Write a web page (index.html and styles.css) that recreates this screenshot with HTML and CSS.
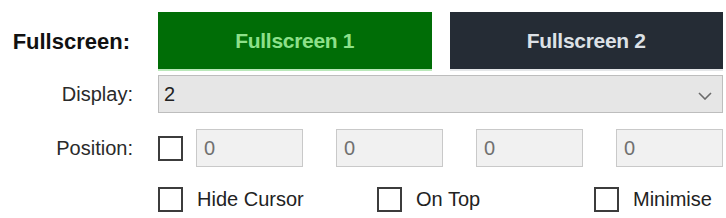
FILE: index.html
```html
<!DOCTYPE html>
<html>
<head>
    <meta charset="utf-8">
    <title>Fullscreen Settings</title>
    <link rel="stylesheet" href="styles.css">
</head>
<body>
    <div class="settings">
        <label class="label label-bold">Fullscreen:</label>
        <div class="screen-buttons">
            <button class="screen-btn screen-btn-active">Fullscreen 1</button>
            <button class="screen-btn screen-btn-dark">Fullscreen 2</button>
        </div>

        <label class="label row-display">Display:</label>
        <div class="select row-display">
            <span>2</span>
            <svg class="chevron" width="14" height="8" viewBox="0 0 14 8">
                <path d="M1 1 L7 7 L13 1" fill="none" stroke="#6b6b6b" stroke-width="1.6"/>
            </svg>
        </div>

        <label class="label row-position">Position:</label>
        <div class="position-row row-position">
            <span class="checkbox"></span>
            <div class="position-inputs">
                <input class="num" type="text" value="0" disabled>
                <input class="num" type="text" value="0" disabled>
                <input class="num" type="text" value="0" disabled>
                <input class="num" type="text" value="0" disabled>
            </div>
        </div>

        <span></span>
        <div class="options">
            <label class="option"><span class="checkbox"></span>Hide Cursor</label>
            <label class="option"><span class="checkbox"></span>On Top</label>
            <label class="option"><span class="checkbox"></span>Minimise</label>
        </div>
    </div>
</body>
</html>
```

FILE: styles.css
```css
body {
    margin: 0;
    padding: 12px 3px 0 0;
    background: #ffffff;
    font-family: "Liberation Sans", Arial, sans-serif;
    font-size: 20px;
    color: #1e1e1e;
}

.settings {
    display: grid;
    grid-template-columns: 158px minmax(0, 1fr);
    align-items: center;
}

.label {
    text-align: right;
    padding-right: 25px;
    color: #2a2a2a;
}

.label-bold {
    font-weight: bold;
    font-size: 22px;
    color: #111;
    padding-right: 28px;
}

.row-display {
    margin-top: 4px;
}

.row-position {
    margin-top: 16px;
}

.screen-buttons {
    display: flex;
    gap: 18px;
    height: 59px;
}

.screen-btn {
    flex: 1;
    min-width: 0;
    border: none;
    font-family: "Liberation Sans", Arial, sans-serif;
    font-weight: bold;
    font-size: 21px;
    letter-spacing: -0.3px;
    padding: 0;
}

.screen-btn-active {
    background: #006d06;
    color: #8de08a;
    border-bottom: 2px solid #b9e8b9;
}

.screen-btn-dark {
    background: #252c35;
    color: #dde1e6;
    border-bottom: 2px solid #e4e6e8;
}

.select {
    display: flex;
    align-items: center;
    justify-content: space-between;
    box-sizing: border-box;
    height: 38px;
    padding: 0 10px 0 5px;
    background: #e6e6e6;
    border: 1px solid #bdbdbd;
    color: #222;
}

.chevron {
    margin-top: 3px;
}

.position-row {
    display: flex;
    align-items: center;
    height: 38px;
}

.position-inputs {
    flex: 1;
    min-width: 0;
    display: flex;
    gap: 33px;
    height: 38px;
    margin-left: 13px;
}

.num {
    flex: 1;
    width: 0;
    min-width: 0;
    box-sizing: border-box;
    border: 1px solid #c9c9c9;
    background: #f1f1f1;
    color: #707070;
    font-family: "Liberation Sans", Arial, sans-serif;
    font-size: 20px;
    padding: 0 0 0 7px;
}

.checkbox {
    display: inline-block;
    flex: none;
    width: 25px;
    height: 25px;
    box-sizing: border-box;
    border: 2px solid #3c3c3c;
    background: #fff;
}

.options {
    display: grid;
    grid-template-columns: 219px 217px auto;
    height: 28px;
    margin-top: 18px;
}

.option {
    display: flex;
    align-items: center;
    gap: 14px;
    color: #222;
}
```
